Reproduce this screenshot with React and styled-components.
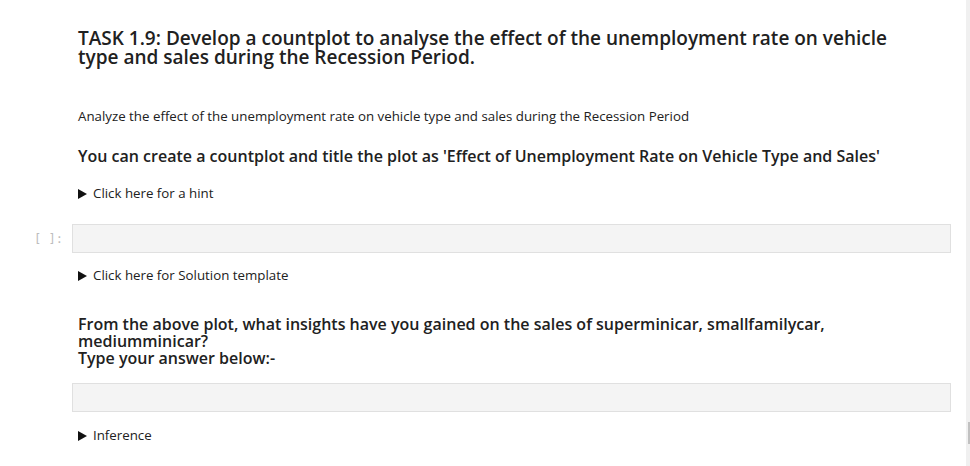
import styled, { createGlobalStyle } from 'styled-components';

const Global = createGlobalStyle`
  html, body {
    margin: 0;
    padding: 0;
    background: #fff;
    overflow: hidden;
  }
  body {
    font-family: "Open Sans", "Noto Sans", sans-serif;
    color: #212121;
  }
`;

const Page = styled.div`
  display: flex;
  height: 466px;
`;

const Notebook = styled.div`
  flex: 1;
  padding: 29px 15px 0 0;
`;

const Scrollbar = styled.div`
  width: 4px;
  background: #f0f0f0;
  position: relative;
`;

const Thumb = styled.div`
  position: absolute;
  left: 2px;
  right: 0;
  top: 422px;
  height: 22px;
  background: #c1c1c1;
`;

const Cell = styled.div`
  display: grid;
  grid-template-columns: 72px 1fr;
  align-items: start;
`;

const Prompt = styled.div`
  font-family: "DejaVu Sans Mono", "Liberation Mono", monospace;
  font-size: 12px;
  color: #bdbdbd;
  text-align: right;
  padding: 8px 9px 0 0;
  white-space: pre;
`;

const Markdown = styled.div`
  padding: 0 40px 0 6px;
`;

const Title = styled.h3`
  margin: 0;
  font-size: 19px;
  font-weight: 600;
  line-height: 19px;
  color: #212121;
`;

const Text = styled.p`
  margin: ${(p) => p.$m || '0'};
  font-size: 13.3px;
  line-height: 17px;
`;

const SubHead = styled.h4`
  margin: ${(p) => p.$m || '0'};
  font-size: 16px;
  font-weight: 600;
  line-height: 17px;
`;

const Details = styled.div`
  display: flex;
  align-items: center;
  gap: 6px;
  font-size: 13.3px;
  line-height: 17px;
  margin: ${(p) => p.$m || '0'};
`;

const Arrow = styled.span`
  display: inline-block;
  width: 0;
  height: 0;
  border-top: 5px solid transparent;
  border-bottom: 5px solid transparent;
  border-left: 9px solid #111;
`;

const InputBox = styled.div`
  height: 27px;
  background: #f4f4f4;
  border: 1px solid #e0e0e0;
  margin: ${(p) => p.$m || '0'};
`;

export default function App() {
  return (
    <>
      <Global />
      <Page>
        <Notebook>
          <Cell>
            <div />
            <Markdown>
              <Title>
                TASK 1.9: Develop a countplot to analyse the effect of the unemployment rate on vehicle type and sales during the Recession Period.
              </Title>
              <Text $m="41px 0 0">
                Analyze the effect of the unemployment rate on vehicle type and sales during the Recession Period
              </Text>
              <SubHead $m="23px 0 0">
                You can create a countplot and title the plot as 'Effect of Unemployment Rate on Vehicle Type and Sales'
              </SubHead>
              <Details $m="20px 0 0">
                <Arrow />
                Click here for a hint
              </Details>
            </Markdown>
          </Cell>
          <Cell style={{ marginTop: 22 }}>
            <Prompt>[ ]:</Prompt>
            <InputBox />
          </Cell>
          <Cell>
            <div />
            <Markdown>
              <Details $m="14px 0 0">
                <Arrow />
                Click here for Solution template
              </Details>
              <SubHead $m="32px 0 0">
                From the above plot, what insights have you gained on the sales of superminicar, smallfamilycar, mediumminicar?
                <br />
                Type your answer below:-
              </SubHead>
            </Markdown>
          </Cell>
          <Cell>
            <div />
            <InputBox $m="16px 0 0" />
          </Cell>
          <Cell>
            <div />
            <Markdown>
              <Details $m="15px 0 0">
                <Arrow />
                Inference
              </Details>
            </Markdown>
          </Cell>
        </Notebook>
        <Scrollbar>
          <Thumb />
        </Scrollbar>
      </Page>
    </>
  );
}
